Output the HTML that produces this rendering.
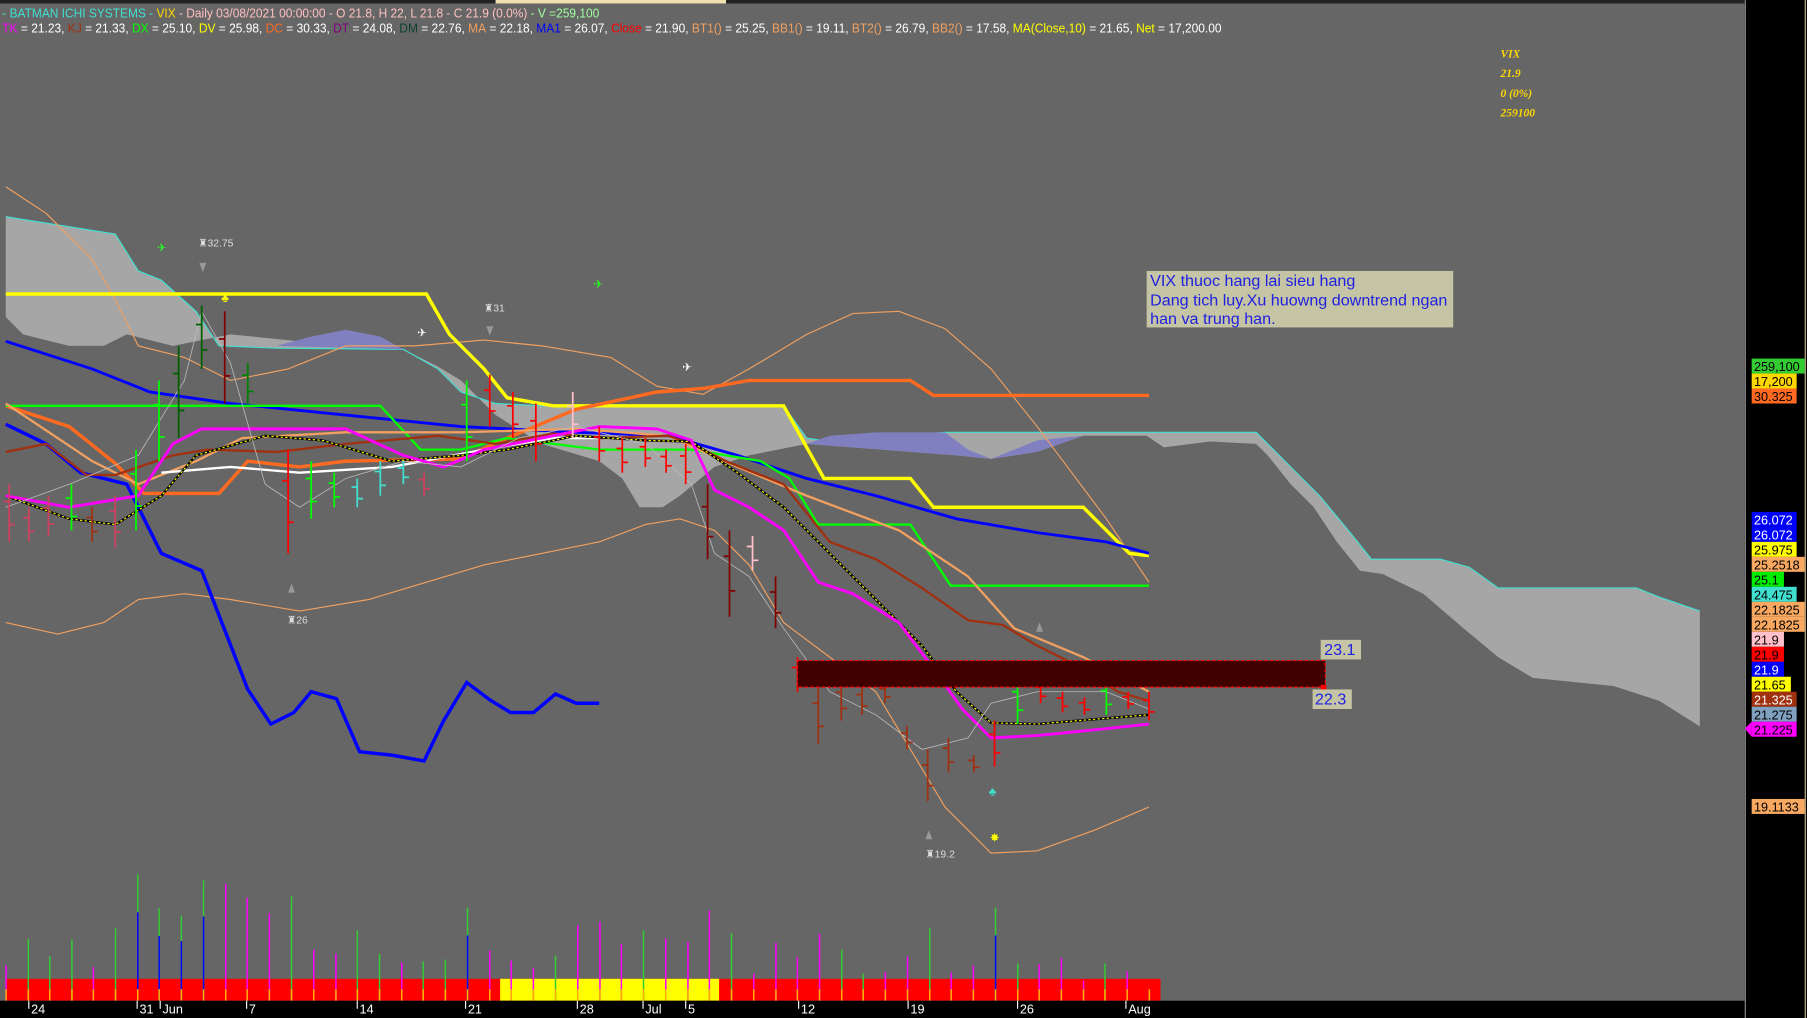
<!DOCTYPE html>
<html><head><meta charset="utf-8"><style>
html,body{margin:0;padding:0;background:#666;overflow:hidden}
svg{display:block}
</style></head><body>
<svg id="s" width="1807" height="1018" viewBox="0 0 1568 883" preserveAspectRatio="none" xmlns="http://www.w3.org/2000/svg" font-family="Liberation Sans, sans-serif">
<rect width="1568" height="883" fill="#666666"/>
<rect x="0" y="0" width="1568" height="3" fill="#222"/>
<rect x="430" y="0" width="200" height="3" fill="#f0e0b0"/>
<polygon fill="#a6a6a6" points="5,188 100,203 120,235 140,243 170,270 190,300 240,302 350,303 380,320 400,340 430,350 470,352 680,352 700,380 720,383 820,375 1090,375 1110,395 1145,430 1170,460 1190,485 1250,485 1275,492 1300,510 1420,510 1440,518 1475,530 1475,630 1440,608 1400,595 1330,588 1300,570 1270,545 1235,515 1200,498 1180,495 1160,470 1140,440 1120,420 1100,395 1090,385 1050,383 1010,388 995,378 940,378 900,392 860,398 830,395 700,385 650,395 620,405 590,430 575,440 555,440 540,415 520,400 470,385 430,360 400,330 380,318 350,303 300,300 200,290 150,300 110,290 90,300 60,300 20,290 5,275"/>
<polyline fill="none" stroke="#40e0d0" stroke-width="1" points="5,188 100,203 120,235 140,243 170,270 190,300 240,302 350,303 380,320 400,340 430,350 470,352 680,352 700,380 720,383 820,375 1090,375 1110,395 1145,430 1170,460 1190,485 1250,485 1275,492 1300,510 1420,510 1440,518 1475,530"/>
<polygon fill="#8080c0" points="240,300 270,292 300,286 330,292 350,303"/>
<polygon fill="#8080c0" points="700,385 720,378 760,375 820,375 840,390 860,398 880,390 900,382 940,378 900,392 860,398 830,395"/>
<polyline fill="none" stroke="#f0a060" stroke-width="1" points="5,162 40,185 80,225 100,260 120,300 160,310 200,330 250,320 300,300 360,300 420,295 470,300 530,310 570,335 610,342 650,320 700,290 740,272 780,270 820,285 860,320 900,370 930,410 960,450 997,505"/>
<polyline fill="none" stroke="#f0a060" stroke-width="1" points="5,540 50,550 90,540 120,520 160,515 200,520 260,530 320,520 370,505 420,490 470,480 520,470 560,455 590,450 620,460 650,490 680,540 720,570 760,600 790,650 820,700 860,740 900,738 950,720 997,700"/>
<polyline fill="none" stroke="#ffff00" stroke-width="3" points="5,255 370,255 390,290 420,320 440,345 480,352 680,352 715,415 790,415 810,440 940,440 960,460 980,480 997,482"/>
<polyline fill="none" stroke="#0000ff" stroke-width="2.5" points="5,296 80,320 130,340 200,350 300,360 400,370 500,375 580,378 640,395 700,415 760,430 830,450 900,462 960,470 997,480"/>
<polyline fill="none" stroke="#0000ff" stroke-width="3" points="5,368 40,385 70,410 110,420 140,480 175,495 215,598 235,628 255,618 270,600 292,606 312,652 340,655 368,660 385,625 405,592 425,607 443,618 463,618 482,602 500,610 520,610"/>
<polyline fill="none" stroke="#ff6a20" stroke-width="3" points="5,352 60,370 100,402 125,428 190,428 215,400 260,405 300,400 400,398 440,380 500,355 570,340 610,337 650,330 790,330 810,343 997,343"/>
<polyline fill="none" stroke="#00ff00" stroke-width="2" points="5,352 330,352 365,390 400,390 440,380 520,390 600,390 660,400 685,415 710,455 790,455 825,508 997,508"/>
<polyline fill="none" stroke="#f0a060" stroke-width="2" points="5,350 50,380 80,400 120,420 170,400 210,380 300,375 400,375 500,372 580,378 640,405 700,430 780,460 840,500 880,545 940,570 997,600"/>
<polyline fill="none" stroke="#a03010" stroke-width="2" points="5,392 40,385 75,412 100,412 150,395 180,390 240,392 300,385 380,378 430,385 480,376 520,380 580,378 600,385 630,400 680,420 720,470 760,485 800,510 840,538 870,542 900,560 940,580 970,600 997,608"/>
<polyline fill="none" stroke="#ffffff" stroke-width="2" points="140,410 200,405 260,410 340,405 420,390 480,380 520,380"/>
<polyline fill="none" stroke="#000" stroke-width="2" points="5,430 60,450 100,455 140,430 170,395 230,378 280,382 340,400 400,395 440,390 500,378 560,382 600,383 640,410 680,440 720,480 760,520 800,560 830,600 860,627 900,628 997,620"/>
<polyline fill="none" stroke="#ffff00" stroke-width="1" stroke-dasharray="2,2" points="5,430 60,450 100,455 140,430 170,395 230,378 280,382 340,400 400,395 440,390 500,378 560,382 600,383 640,410 680,440 720,480 760,520 800,560 830,600 860,627 900,628 997,620"/>
<polyline fill="none" stroke="#ff00ff" stroke-width="2.5" points="5,430 60,440 120,430 150,385 175,372 300,372 350,395 385,405 420,390 470,380 520,370 570,372 600,382 620,425 650,440 680,460 710,505 740,515 780,540 810,580 835,615 860,640 900,638 960,632 997,628"/>
<polyline fill="none" stroke="#bbb" stroke-width="0.7" points="5,440 60,420 120,395 160,330 175,270 200,315 230,420 260,440 300,415 350,400 400,405 450,380 500,370 560,385 600,420 620,480 650,500 680,545 720,600 760,620 800,650 840,640 860,610 900,600 960,600 997,615"/>
<g id="candles"></g>
<rect x="692" y="573" width="458" height="23" fill="#400000" stroke="#ff0000" stroke-dasharray="3,2"/>
<rect x="1146" y="594" width="5" height="5" fill="#f00"/>
<rect x="1146" y="555" width="35" height="17" fill="#c5c5a5"/>
<text x="1149" y="568" font-size="14" fill="#2020e0">23.1</text>
<rect x="1139" y="598" width="34" height="17" fill="#c5c5a5"/>
<text x="1141" y="611" font-size="14" fill="#2020e0">22.3</text>
<rect x="995" y="235" width="266" height="49" fill="#c5c5a5"/>
<g font-size="14" fill="#2020e0"><text x="998" y="248">VIX thuoc hang lai sieu hang</text><text x="998" y="265">Dang tich luy.Xu huowng downtrend ngan</text><text x="998" y="281">han va trung han.</text></g>
<g font-size="9" fill="#ddd"><text x="172" y="214">♜32.75</text><text x="420" y="270">♜31</text><text x="249" y="541">♜26</text><text x="803" y="744">♜19.2</text></g>
<g fill="#999"><polygon points="173,228 179,228 176,236"/><polygon points="422,283 428,283 425,291"/><polygon points="250,514 256,514 253,506"/><polygon points="803,728 809,728 806,720"/><polygon points="899,548 905,548 902,540"/></g>
<g font-size="10"><text x="136" y="218" fill="#2f2">✈</text><text x="515" y="250" fill="#2f2">✈</text><text x="362" y="292" fill="#fff">✈</text><text x="592" y="322" fill="#fff">✈</text><text x="192" y="262" fill="#ff0">♣</text><text x="859" y="730" fill="#ff0">✸</text><text x="858" y="690" fill="#40e0d0">♣</text></g>
<g font-size="11"><text x="2" y="15" textLength="518" lengthAdjust="spacingAndGlyphs"><tspan fill="#40e0d0">- BATMAN  ICHI SYSTEMS - </tspan><tspan fill="#ffd700">VIX</tspan><tspan fill="#ffc0c0"> - Daily 03/08/2021 00:00:00 - O 21.8, H 22, L 21.8 - C 21.9 (0.0%)</tspan><tspan fill="#a0ffa0"> - V =259,100</tspan></text>
<text x="2" y="28" textLength="1058" lengthAdjust="spacingAndGlyphs"><tspan fill="#ff00ff">TK</tspan><tspan fill="#fff"> = 21.23, </tspan><tspan fill="#a03010">KJ</tspan><tspan fill="#fff"> = 21.33, </tspan><tspan fill="#0f0">DX</tspan><tspan fill="#fff"> = 25.10, </tspan><tspan fill="#ff0">DV</tspan><tspan fill="#fff"> = 25.98, </tspan><tspan fill="#ff6a20">DC</tspan><tspan fill="#fff"> = 30.33, </tspan><tspan fill="#800080">DT</tspan><tspan fill="#fff"> = 24.08, </tspan><tspan fill="#104030">DM</tspan><tspan fill="#fff"> = 22.76, </tspan><tspan fill="#f0a060">MA</tspan><tspan fill="#fff"> = 22.18, </tspan><tspan fill="#00f">MA1</tspan><tspan fill="#fff"> = 26.07, </tspan><tspan fill="#f00">Close</tspan><tspan fill="#fff"> = 21.90, </tspan><tspan fill="#f0a060">BT1()</tspan><tspan fill="#fff"> = 25.25, </tspan><tspan fill="#f0a060">BB1()</tspan><tspan fill="#fff"> = 19.11, </tspan><tspan fill="#f0a060">BT2()</tspan><tspan fill="#fff"> = 26.79, </tspan><tspan fill="#f0a060">BB2()</tspan><tspan fill="#fff"> = 17.58, </tspan><tspan fill="#ff0">MA(Close,10)</tspan><tspan fill="#fff"> = 21.65, </tspan><tspan fill="#ff0">Net</tspan><tspan fill="#fff"> = 17,200.00</tspan></text></g>
<g font-family="Liberation Serif, serif" font-style="italic" font-weight="bold" font-size="10" fill="#ffd700"><text x="1302" y="50">VIX</text><text x="1302" y="67">21.9</text><text x="1302" y="84">0 (0%)</text><text x="1302" y="101">259100</text></g>
<rect x="5" y="849" width="1002" height="19" fill="#ff0000"/>
<rect x="434" y="849" width="190" height="19" fill="#ffff00"/>
<g id="vol"></g>
<rect x="0" y="868" width="1514" height="15" fill="#000"/>
<g font-size="11" fill="#fff" id="dates"></g>
<rect x="1514" y="0" width="54" height="883" fill="#000"/>
<line x1="1514.5" y1="0" x2="1514.5" y2="883" stroke="#888"/>
<line x1="1566.5" y1="0" x2="1566.5" y2="883" stroke="#c8b890"/>
<g id="lab" font-size="11"></g>
</svg>
<script>
var NS="http://www.w3.org/2000/svg";
function el(p,t,a,txt){var e=document.createElementNS(NS,t);for(var k in a)e.setAttribute(k,a[k]);if(txt)e.textContent=txt;document.getElementById(p).appendChild(e);}
var v=[[8,315,'m'],[37,235,'g'],[65,288,'g'],[94,237,'g'],[122,320,'m'],[151,204,'g'],[180,42,'b'],[208,144,'b'],[237,165,'b'],[266,60,'b'],[295,70,'m'],[323,112,'m'],[352,158,'m'],[381,108,'g'],[410,268,'m'],[439,280,'m'],[467,210,'g'],[496,280,'g'],[525,305,'m'],[553,303,'g'],[582,297,'g'],[611,141,'b'],[640,270,'m'],[668,300,'m'],[697,322,'m'],[726,285,'g'],[755,195,'m'],[784,184,'m'],[812,250,'m'],[841,210,'g'],[870,233,'m'],[899,244,'m'],[927,150,'m'],[956,218,'g'],[985,340,'m'],[1014,248,'m'],[1042,290,'m'],[1071,220,'m'],[1100,267,'g'],[1128,340,'g'],[1157,335,'m'],[1186,288,'m'],[1215,204,'g'],[1243,336,'m'],[1272,315,'m'],[1301,141,'b'],[1330,309,'g'],[1358,311,'m'],[1387,292,'m'],[1416,360,'m'],[1444,309,'g'],[1473,333,'m'],[1502,410,'g']];
v.forEach(function(b){var x=b[0]/1.506,y=746.3+b[1]/3.457;var c=b[2]=='m'?'#ff00ff':'#33cc33';
el('vol','line',{x1:x,y1:y,x2:x,y2:868,stroke:c,'stroke-width':1.3});
if(b[2]=='b')el('vol','line',{x1:x,y1:y+(868-y)*0.3,x2:x,y2:868,stroke:'#0000ff','stroke-width':1.3});
el('vol','line',{x1:x,y1:858,x2:x,y2:868,stroke:'#ffb000','stroke-width':1.3});});
[['24',27],['31',121],['Jun',141],['7',216],['14',312],['21',406],['28',503],['Jul',560],['5',597],['12',695],['19',790],['26',885],['Aug',979]].forEach(function(d){el('dates','text',{x:d[1],y:879},d[0]);el('dates','line',{x1:d[1]-2,y1:868,x2:d[1]-2,y2:875,stroke:'#fff'});});
var L=[[311,'259,100','#33cc33','#000',46],[324,'17,200','#ffd700','#000',39],[337,'30.325','#ff6a20','#000',39],[444,'26.072','#0000ff','#fff',39],[457,'26.072','#0000ff','#fff',39],[470,'25.975','#ffff00','#000',39],[483,'25.2518','#f8a860','#000',46],[496,'25.1','#00ee00','#000',28],[509,'24.475','#40e0d0','#000',39],[522,'22.1825','#f8a860','#000',46],[535,'22.1825','#f8a860','#000',46],[548,'21.9','#ffc0cb','#000',28],[561,'21.9','#ff0000','#000',28],[574,'21.9','#0000ff','#fff',28],[587,'21.65','#ffff00','#000',34],[600,'21.325','#a03010','#fff',39],[613,'21.275','#80a0c0','#000',39],[626,'21.225','#ff00ff','#000',39],[693,'19.1133','#f8a860','#000',46]];
L.forEach(function(l){el('lab','rect',{x:1520,y:l[0],width:l[4],height:13,fill:l[2]});el('lab','text',{x:1522,y:l[0]+11,fill:l[3]},l[1]);});
el('lab','polygon',{points:'1514,632 1520,626 1520,639',fill:'#ff00ff'});
var C=[[8,420,470,'#d04060'],[25,440,470,'#d04060'],[42,430,465,'#d04060'],[62,420,460,'#0f0'],[80,440,470,'#a03010'],[100,430,475,'#d04060'],[118,390,460,'#0f0'],[138,330,400,'#0f0'],[155,300,380,'#006000'],[175,265,320,'#006000'],[195,270,350,'#800000'],[215,315,350,'#008000'],[250,390,480,'#f00'],[270,400,450,'#0f0'],[290,410,440,'#0f0'],[310,415,440,'#40e0d0'],[330,400,430,'#40e0d0'],[350,400,420,'#40e0d0'],[368,410,430,'#d04060'],[405,330,400,'#0f0'],[425,325,370,'#f00'],[445,340,380,'#f00'],[465,350,400,'#f00'],[497,340,380,'#ffc0cb'],[520,370,400,'#f00'],[540,380,410,'#f00'],[560,380,405,'#f00'],[578,390,410,'#f00'],[595,385,420,'#f00'],[614,420,485,'#800000'],[633,460,535,'#800000'],[653,465,495,'#ffc0cb'],[673,500,545,'#800000'],[692,570,600,'#f00'],[710,595,645,'#a03010'],[730,590,625,'#a03010'],[748,595,620,'#a03010'],[768,592,610,'#a03010'],[787,630,650,'#a03010'],[805,650,695,'#a03010'],[823,640,670,'#a03010'],[845,655,670,'#a03010'],[863,625,665,'#f00'],[883,588,628,'#0f0'],[903,590,610,'#f00'],[922,600,618,'#f00'],[941,605,620,'#f00'],[960,590,620,'#0f0'],[979,600,615,'#f00'],[997,600,625,'#f00']];
C.forEach(function(c){el('candles','line',{x1:c[0],y1:c[1],x2:c[0],y2:c[2],stroke:c[3],'stroke-width':1.5});el('candles','line',{x1:c[0]-5,y1:c[1]+(c[2]-c[1])*0.3,x2:c[0],y2:c[1]+(c[2]-c[1])*0.3,stroke:c[3],'stroke-width':1.5});el('candles','line',{x1:c[0],y1:c[1]+(c[2]-c[1])*0.7,x2:c[0]+5,y2:c[1]+(c[2]-c[1])*0.7,stroke:c[3],'stroke-width':1.5});});
</script>
</body></html>
